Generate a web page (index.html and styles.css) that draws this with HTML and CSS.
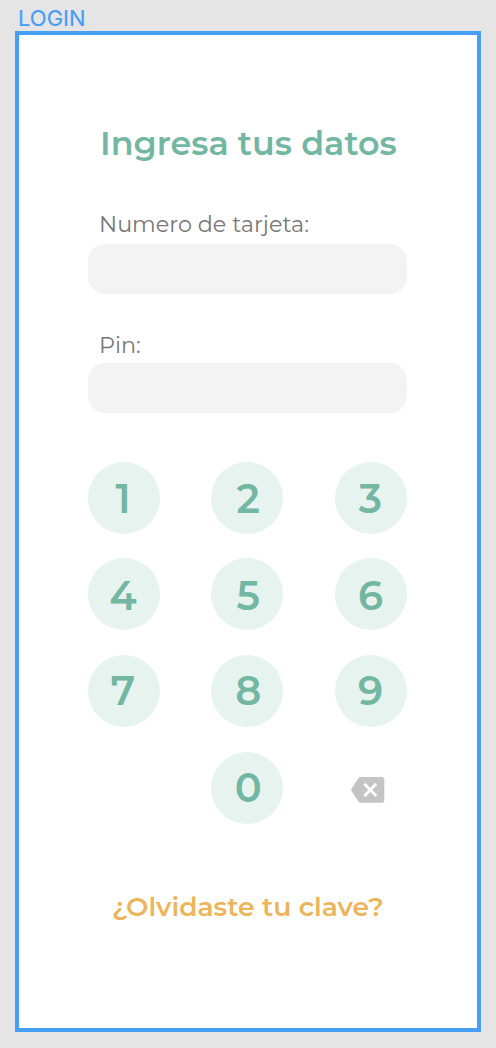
FILE: index.html
```html
<!DOCTYPE html>
<html lang="es">
<head>
<meta charset="utf-8">
<title>Login</title>
<link rel="stylesheet" href="styles.css">
</head>
<body>
<div class="frame-name">LOGIN</div>
<main class="screen">
  <h1 class="title">Ingresa tus datos</h1>
  <form class="form">
    <label class="label label-card" for="card">Numero de tarjeta:</label>
    <input class="field" id="card" type="text">
    <label class="label label-pin" for="pin">Pin:</label>
    <input class="field" id="pin" type="text">
  </form>
  <div class="keypad">
    <button class="key key-upper key-left">1</button>
    <button class="key key-upper">2</button>
    <button class="key key-upper key-right">3</button>
    <button class="key key-upper key-left">4</button>
    <button class="key key-upper">5</button>
    <button class="key key-upper key-right">6</button>
    <button class="key key-left">7</button>
    <button class="key">8</button>
    <button class="key key-right">9</button>
    <button class="key key-zero">0</button>
    <button class="erase" aria-label="Borrar">
      <svg width="34" height="26" viewBox="0 0 34 26">
        <path d="M9.6 0H30.8Q33.3 0 33.3 2.5V23.2Q33.3 25.7 30.8 25.7H9.6Q8.2 25.7 7.4 24.5L.5 14Q0 12.9 .5 11.8L7.4 1.2Q8.2 0 9.6 0Z" fill="#c4c4c4"/>
        <path d="M13.3 6.8L25.2 18.9M25.2 6.8L13.3 18.9" stroke="#fff" stroke-width="2.9"/>
      </svg>
    </button>
  </div>
  <a class="forgot">¿Olvidaste tu clave?</a>
</main>
</body>
</html>
```
FILE: styles.css
```css
* { box-sizing: border-box; }
body {
  margin: 0;
  height: 1048px;
  padding: 0 15px;
  overflow: hidden;
  background: #e5e5e5;
  font-family: Montserrat, Inter, sans-serif;
}
.frame-name {
  height: 31px;
  padding: 4px 0 0 3px;
  font: 400 22px/28px Inter, sans-serif;
  color: #469ff5;
  -webkit-text-stroke: 0.2px #469ff5;
}
.screen {
  width: 466px;
  height: 1001px;
  padding: 0 70px 0 69px;
  border: 4px solid #469ff5;
  background: #fff;
}
.title {
  margin: 0;
  padding: 86px 0 0 12px;
  font-size: 33.4px;
  font-weight: 600;
  line-height: 44px;
  color: #73b7a2;
  white-space: nowrap;
}
.form { margin: 0; }
.label {
  display: block;
  height: 30px;
  padding-left: 11px;
  font-size: 22.3px;
  font-weight: 400;
  line-height: 30px;
  color: #777;
  white-space: nowrap;
}
.label-card { margin-top: 44px; }
.label-pin { margin-top: 36px; }
.field {
  display: block;
  width: 318.5px;
  height: 50px;
  margin: 5px 0 0;
  padding: 0 16px;
  border: 0;
  border-radius: 17px;
  background: #f3f3f3;
}
#pin { margin-top: 3px; }
.keypad {
  display: grid;
  grid-template-columns: repeat(3, 72px);
  grid-auto-rows: 72px;
  gap: 24.7px 51.25px;
  margin-top: 48.5px;
}
.key, .erase {
  display: flex;
  align-items: center;
  justify-content: center;
  padding: 0;
  border: 0;
  border-radius: 50%;
}
.key {
  padding: 1px 0 0 2px;
  background: #e6f3ef;
  color: #73b7a2;
  font: 600 40px/48px Montserrat, Inter, sans-serif;
}
.key-upper { padding-top: 3px; }
.key-left { padding-right: 4px; }
.key-right { padding-left: 0; }
.key-zero { grid-column: 2; }
.erase {
  padding: 4px 5px 0 0;
  background: none;
}
.forgot {
  display: block;
  margin-top: 65px;
  padding-left: 24px;
  font-size: 26.6px;
  font-weight: 600;
  line-height: 36px;
  color: #ecb55c;
  white-space: nowrap;
}
```
